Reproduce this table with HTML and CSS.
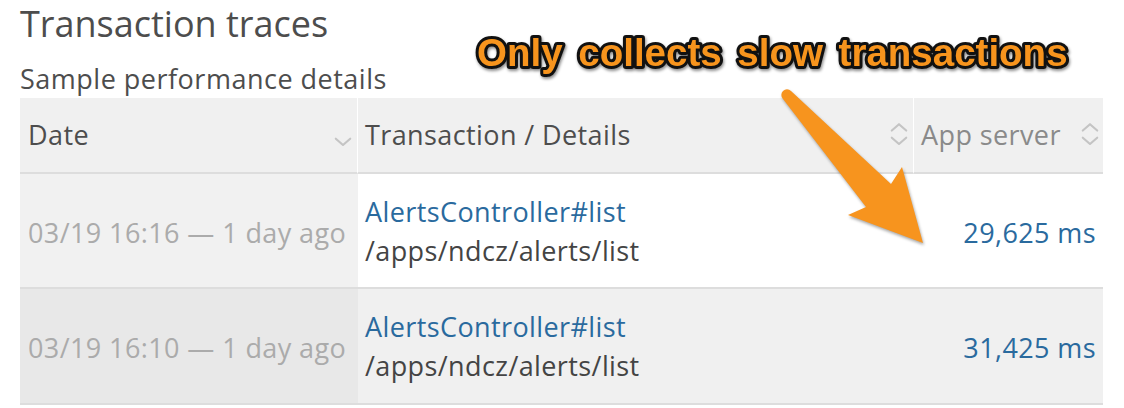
FILE: index.html
```html
<!DOCTYPE html>
<html>
<head>
<meta charset="utf-8">
<link rel="stylesheet" href="styles.css">
</head>
<body>
<div class="page">
  <h1 class="title">Transaction traces</h1>
  <h2 class="subtitle">Sample performance details</h2>
  <div class="grid">
    <div class="th"><span>Date</span>
      <svg class="sort" viewBox="0 0 20 28"><polyline class="dn" points="2,17 10,24 18,17"/></svg>
    </div>
    <div class="th"><span>Transaction / Details</span>
      <svg class="sort" viewBox="0 0 20 28"><polyline points="2,9 10,2 18,9"/><polyline points="2,17 10,24 18,17"/></svg>
    </div>
    <div class="th light"><span>App server</span>
      <svg class="sort" viewBox="0 0 20 28"><polyline points="2,9 10,2 18,9"/><polyline points="2,17 10,24 18,17"/></svg>
    </div>

    <div class="td date r1">03/19 16:16 — 1 day ago</div>
    <div class="td tx r1"><a class="link">AlertsController#list</a><span class="path">/apps/ndcz/alerts/list</span></div>
    <div class="td num r1"><a class="link">29,625 ms</a></div>

    <div class="td date r2">03/19 16:10 — 1 day ago</div>
    <div class="td tx r2"><a class="link">AlertsController#list</a><span class="path">/apps/ndcz/alerts/list</span></div>
    <div class="td num r2"><a class="link">31,425 ms</a></div>
  </div>
</div>
<svg class="annot" width="1124" height="408" viewBox="0 0 1124 408">
  <g class="arrow">
    <path d="M783 99 A5.5 5.5 0 0 1 791 91 L891 184 L902 167 L923 243 L848 215 L866 207 Z"/>
  </g>
  <text class="callout" x="477" y="66">Only collects slow transactions</text>
</svg>
</body>
</html>
```
FILE: styles.css
```css
html, body {
  margin: 0;
  padding: 0;
  background: #fff;
}
body {
  font-family: "Open Sans", "Liberation Sans", sans-serif;
  color: #4d4d4d;
  position: relative;
  width: 1124px;
  height: 408px;
  overflow: hidden;
}
.page {
  padding: 2px 0 0 20px;
}
.title {
  margin: 0;
  font-size: 36px;
  font-weight: 400;
  line-height: 44px;
  color: #4d4d4d;
}
.subtitle {
  margin: 18px 0 0 0;
  font-size: 27px;
  letter-spacing: 0.5px;
  font-weight: 400;
  line-height: 30px;
  color: #4d4d4d;
}
.grid {
  margin-top: 4px;
  display: grid;
  grid-template-columns: 338px 556px 189px;
  grid-template-rows: 76px 115px 116px;
  width: 1083px;
  background: #fff;
}
.th, .td {
  border-bottom: 2px solid #dddddd;
}
.th {
  background: #f0f0f0;
  display: flex;
  align-items: center;
  padding: 0 5px 0 8px;
  font-size: 27px;
  letter-spacing: 0.4px;
  line-height: 36px;
  color: #4d4d4d;
  border-right: 1px solid #fff;
}
.th + .th { padding-left: 7px; }
.th.light { color: #8a8a8a; padding-right: 4px; border-right: 0; }
.th span { flex: 1; }
.sort {
  width: 18px;
  height: 26px;
  flex: none;
  fill: none;
  stroke: #c4c4c4;
  stroke-width: 2.4;
  stroke-linecap: round;
  stroke-linejoin: round;
}
.th:first-child .sort { margin-top: 2px; }
.td {
  font-size: 27px;
  letter-spacing: 0.4px;
  line-height: 39px;
}
.date {
  display: flex;
  align-items: center;
  padding: 3px 0 0 8px;
  color: #ababab;
  background: #f1f1f1;
}
.date.r2 { background: #e8e8e8; }
.tx {
  display: flex;
  flex-direction: column;
  justify-content: center;
  padding: 0 0 0 7px;
  background: #fff;
}
.num {
  display: flex;
  align-items: center;
  justify-content: flex-end;
  padding: 3px 7px 0 0;
  background: #fff;
}
.tx.r2, .num.r2 { background: #f0f0f0; }
.link { color: #2a6a9e; text-decoration: none; }
.path { color: #444; }
.annot {
  position: absolute;
  left: 0;
  top: 0;
  pointer-events: none;
}
.arrow {
  fill: #f7941e;
  filter: drop-shadow(1px 2px 1.5px rgba(0, 0, 0, 0.35));
}
.callout {
  font-family: "Liberation Sans", Arial, sans-serif;
  font-weight: 700;
  font-size: 38.5px;
  word-spacing: 5px;
  fill: #f7941d;
  stroke: #111;
  stroke-width: 6px;
  stroke-linejoin: round;
  paint-order: stroke fill;
  filter: drop-shadow(1px 2px 1.5px rgba(0, 0, 0, 0.45));
}
```
